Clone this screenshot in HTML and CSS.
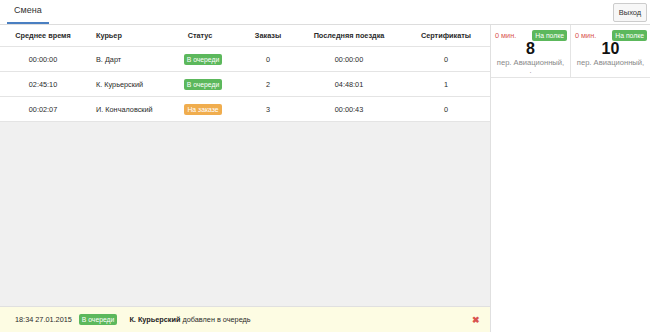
FILE: index.html
```html
<!DOCTYPE html>
<html lang="ru">

<head>
    <meta charset="UTF-8">
    <meta name="viewport" content="width=device-width, initial-scale=1.0">
    <title>Смена</title>
    <link rel="stylesheet" href="styles.css">
</head>

<body>
    <div class="topbar">
        <div class="tabs">
            <span class="tab active">Смена</span>
        </div>
        <button class="logout">Выход</button>
    </div>

    <div class="content">
        <div class="main">
            <table class="shift">
                <tr>
                    <th class="c-avg">Среднее время</th>
                    <th class="c-name left">Курьер</th>
                    <th class="c-status">Статус</th>
                    <th class="c-orders">Заказы</th>
                    <th class="c-last">Последняя поездка</th>
                    <th>Сертификаты</th>
                </tr>
                <tr>
                    <td>00:00:00</td>
                    <td class="left">В. Дарт</td>
                    <td><span class="badge green">В очереди</span></td>
                    <td>0</td>
                    <td>00:00:00</td>
                    <td>0</td>
                </tr>
                <tr>
                    <td>02:45:10</td>
                    <td class="left">К. Курьерский</td>
                    <td><span class="badge green">В очереди</span></td>
                    <td>2</td>
                    <td>04:48:01</td>
                    <td>1</td>
                </tr>
                <tr>
                    <td>00:02:07</td>
                    <td class="left">И. Кончаловский</td>
                    <td><span class="badge orange">На заказе</span></td>
                    <td>3</td>
                    <td>00:00:43</td>
                    <td>0</td>
                </tr>
            </table>
            <div class="filler"></div>
            <div class="notice">
                <span class="notice-time">18:34 27.01.2015</span>
                <span class="badge green">В очереди</span>
                <span class="notice-text"><b>К. Курьерский</b> добавлен в очередь</span>
                <span class="close">&#10006;</span>
            </div>
        </div>

        <div class="side">
            <div class="car">
                <div class="car-top">
                    <span class="wait">0 мин.</span>
                    <span class="badge green">На полке</span>
                </div>
                <div class="car-num">8</div>
                <div class="car-addr">пер. Авиационный,</div>
                <div class="car-more">.</div>
            </div>
            <div class="car">
                <div class="car-top">
                    <span class="wait">0 мин.</span>
                    <span class="badge green">На полке</span>
                </div>
                <div class="car-num">10</div>
                <div class="car-addr">пер. Авиационный,</div>
                <div class="car-more">&nbsp;</div>
            </div>
        </div>
    </div>
</body>

</html>
```

FILE: styles.css
```css
body {
    margin: 0;
    font-family: "Liberation Sans", Arial, sans-serif;
    font-size: 7.3px;
    color: #2a2a2a;
    height: 332px;
    overflow: hidden;
}

/* верхняя панель */
.topbar {
    height: 24px;
    border-bottom: 1px solid #ddd;
    display: flex;
    justify-content: space-between;
    align-items: flex-start;
}

.tabs {
    display: flex;
    padding-left: 7px;
}

.tab {
    font-size: 9px;
    padding: 5px 7px 0 7px;
    height: 17px;
    color: #333;
}

.tab.active {
    border-bottom: 2px solid #4a7fc1;
}

.logout {
    margin: 3px 3px 0 0;
    height: 19px;
    width: 34px;
    padding: 0;
    font-family: inherit;
    font-size: 7.5px;
    color: #333;
    background: #f7f7f7;
    border: 1px solid #ccc;
    border-radius: 2px;
}

/* основная часть */
.content {
    display: flex;
    height: 307px;
}

.main {
    width: 490px;
    display: flex;
    flex-direction: column;
    background: #f0f0f0;
}

.shift {
    width: 100%;
    border-collapse: collapse;
    table-layout: fixed;
    background: #fff;
}

.shift th {
    font-weight: bold;
    height: 21px;
    padding: 0;
    text-align: center;
    border-bottom: 1px solid #e4e4e4;
}

.shift td {
    height: 24px;
    padding: 0;
    text-align: center;
    border-bottom: 1px solid #e4e4e4;
}

.shift .c-avg { width: 86px; }
.shift .c-name { width: 64px; }
.shift .c-status { width: 80px; }
.shift .c-orders { width: 56px; }
.shift .c-last { width: 106px; }

.shift .left {
    text-align: left;
    padding-left: 10px;
}

.badge {
    display: inline-block;
    color: #fff;
    font-size: 6.8px;
    padding: 2px 3px;
    border-radius: 2px;
    line-height: 7px;
}

.shift .badge {
    margin-left: 6px;
}

.badge.green {
    background: #5cb85c;
}

.badge.orange {
    background: #f0ad4e;
}

.filler {
    flex: 1;
}

/* уведомление внизу */
.notice {
    height: 25px;
    border-top: 1px solid #e0e0e0;
    background: #fdfce3;
    display: flex;
    align-items: center;
    padding: 0 10px 0 15px;
}

.notice-time {
    margin-right: 7px;
}

.notice .badge {
    margin-right: 12px;
}

.notice-text {
    flex: 1;
}

.notice-text b {
    color: #222;
}

.close {
    color: #d9534f;
    font-size: 9px;
    font-weight: bold;
}

/* правая панель */
.side {
    flex: 1;
    border-left: 1px solid #e0e0e0;
    display: flex;
    align-items: flex-start;
    background: #fff;
}

.car {
    width: 79px;
    border-bottom: 1px solid #e4e4e4;
    border-right: 1px solid #e4e4e4;
    text-align: center;
    padding-bottom: 2px;
}

.car:last-child {
    border-right: none;
    flex: 1;
}

.car-top {
    display: flex;
    justify-content: space-between;
    align-items: center;
    padding: 5px 3px 0 4px;
}

.wait {
    color: #d9534f;
}

.car-num {
    font-size: 16px;
    font-weight: bold;
    color: #111;
    line-height: 15px;
}

.car-addr {
    color: #888;
    margin-top: 2px;
    font-size: 7.6px;
}

.car-more {
    color: #888;
    line-height: 8px;
}
```
